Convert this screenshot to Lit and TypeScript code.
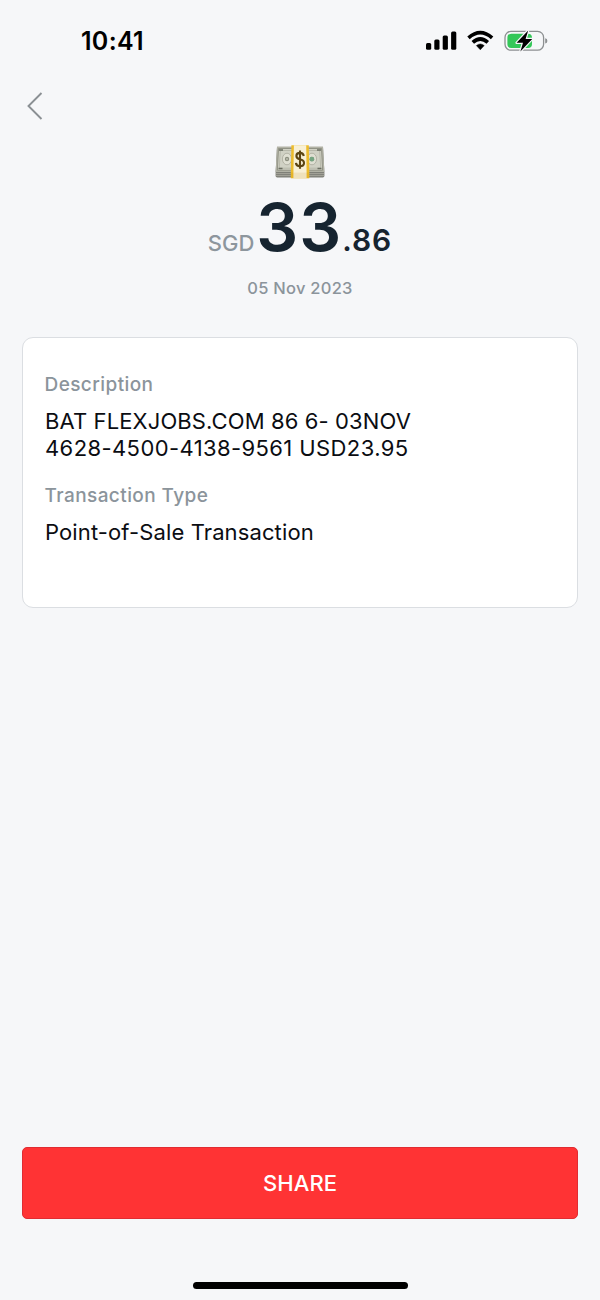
import { LitElement, html, css, svg } from "lit";
import { customElement, property } from "lit/decorators.js";

@customElement("status-bar")
class StatusBar extends LitElement {
  @property() time = "";

  static styles = css`
    :host {
      display: flex;
      justify-content: space-between;
      align-items: center;
      height: 82px;
      padding: 0 52px 0 81px;
      box-sizing: border-box;
    }
    .time {
      font-size: 25px;
      line-height: 30px;
      font-weight: 570;
      letter-spacing: 0.3px;
      color: #000;
    }
    .icons {
      display: block;
    }
  `;

  render() {
    return html`
      <span class="time">${this.time}</span>
      <svg class="icons" width="122" height="24" viewBox="426 28.6 122 24">
        <rect x="426" y="42.6" width="5.2" height="6.8" rx="1.5" />
        <rect x="434.3" y="39.2" width="5.2" height="10.2" rx="1.5" />
        <rect x="442.7" y="35" width="5.2" height="14.4" rx="1.5" />
        <rect x="451.1" y="31" width="5.2" height="18.4" rx="1.5" />
        <g fill="none" stroke="#000" stroke-width="3.7">
          <path d="M468.5 37.4 Q480.3 27.1 492.1 37.4" />
          <path d="M472.8 42 Q480.3 35.2 487.8 42" />
        </g>
        <path d="M476.4 45.2 Q480.3 42 484.2 45.2 L480.3 49.4 Z" stroke="#000" stroke-width=".5" />
        <rect x="505" y="31" width="38.6" height="18.8" rx="6" fill="none" stroke="#8d9092" stroke-width="1.3" />
        <path d="M545.2 37.8 Q547.4 38.2 547.4 40.5 Q547.4 42.8 545.2 43.2 Z" fill="#8d9092" />
        <rect x="507.4" y="33.3" width="24.6" height="14.2" rx="4" fill="#34c759" />
        <path d="M528.2 30 L516.6 42.4 L523 42.4 L520.4 51 L532.2 38.6 L525.6 38.6 Z"
          stroke="#f6f7f9" stroke-width="2.4" paint-order="stroke" stroke-linejoin="round" />
      </svg>
    `;
  }
}

const bill = (x: number) => svg`
  <g transform="translate(${x} 0)">
    <ellipse cx="0" cy="15" rx="4.6" ry="5.8" fill="#dfdfd2" stroke="#a9aa9c" stroke-width=".8" />
    <circle cx="0" cy="15" r="2.2" fill="#8d9080" />
    <circle cx="0" cy="15" r=".8" fill="#dfdfd2" />
  </g>`;

@customElement("money-icon")
class MoneyIcon extends LitElement {
  static styles = css`
    :host,
    .art {
      display: block;
    }
  `;

  render() {
    return html`
      <svg class="art" width="50" height="36" viewBox="0 0 50 36">
        <path d="M2 3 H48 L49.4 28 V32 Q49.4 33.4 47.8 33.4 H2.2 Q.6 33.4 .6 32 V28 Z" fill="#7f8078" />
        <path d="M.8 29.6 H49.2 M.8 31.6 H49.2" stroke="#b4b5aa" stroke-width=".7" />
        <path d="M2 2.6 H48 L49.4 28 H.6 Z" fill="#b1b2a5" />
        <path d="M3.5 4.5 H46.5 L47.6 26.2 H2.4 Z" fill="#d0d1c4" stroke="#85877a" stroke-width=".8" />
        <path d="M5.3 6.5 H44.7 L45.7 24.2 H4.3 Z" fill="none" stroke="#b0b1a3" stroke-width=".8" />
        <path d="M4 6 h4 M42 6 h4 M3.5 24.5 h4 M42.5 24.5 h4" stroke="#6a6d61" stroke-width="1.5" />
        ${bill(12)} ${bill(37)}
        <circle cx="36.8" cy="15.2" r="2.4" fill="#75a581" />
        <path d="M16.4 1.2 H33.8 L34.3 28.4 V34.3 H15.8 V28.4 Z" fill="#edbc2c" />
        <path d="M18.9 1.2 H31.2 L31.6 28.6 V34.3 H18.4 V28.6 Z" fill="#f8f0d5" />
        <path d="M15.8 28.6 H34.3 V34.3 H15.8 Z" fill="#b67e00" opacity=".12" />
        <path d="M28.8 12 Q28.2 8.9 25 8.9 Q21.4 8.9 21.4 12 Q21.4 14.5 25 15.2 Q29 16 29 19 Q29 22.2 25 22.2 Q21.3 22.2 20.9 18.8 M25 6.4 V24.8"
          fill="none" stroke="#5c4512" stroke-width="2.1" />
      </svg>
    `;
  }
}

@customElement("app-root")
class AppRoot extends LitElement {
  static styles = css`
    :host {
      display: flex;
      flex-direction: column;
      height: 1300px;
      box-sizing: border-box;
      background: #f6f7f9;
      font-family: Inter, "Liberation Sans", sans-serif;
      color: #0b0d12;
    }
    .nav {
      display: flex;
      align-items: center;
      height: 47px;
      padding-left: 27px;
    }
    .summary {
      display: flex;
      flex-direction: column;
      align-items: center;
      padding-top: 15px;
    }
    .amount {
      display: flex;
      align-items: baseline;
      height: 66px;
      margin-top: 14px;
      line-height: 66px;
      font-weight: 600;
      color: #162430;
    }
    .currency {
      font-size: 22px;
      font-weight: 550;
      color: #8d969d;
      margin-right: 2px;
    }
    .whole {
      font-size: 66px;
      letter-spacing: 1px;
    }
    .cents {
      font-size: 30px;
      letter-spacing: 0.9px;
    }
    .date {
      margin-top: 18px;
      font-size: 16.5px;
      line-height: 20px;
      font-weight: 550;
      letter-spacing: 0.25px;
      color: #8b949b;
    }
    .card {
      margin: 39px 22px 0;
      height: 271px;
      padding: 35px 21.5px 0;
      box-sizing: border-box;
      border: 1.5px solid #dbdee2;
      border-radius: 11px;
      background: #fff;
    }
    .label {
      font-size: 19px;
      line-height: 24px;
      font-weight: 550;
      letter-spacing: 0.42px;
      color: #8b949b;
    }
    .value {
      margin: 11px 0 22px;
      padding-left: 0.5px;
      font-size: 22px;
      line-height: 27px;
      letter-spacing: 0.12px;
    }
    .line {
      display: block;
    }
    .digits {
      letter-spacing: 0.4px;
    }
    .share {
      margin: auto 22px 0;
      height: 72px;
      border: 1px solid #e02c32;
      border-radius: 5px;
      background: #ff3334;
      color: #fff;
      font: 500 22px/70px Inter, "Liberation Sans", sans-serif;
      letter-spacing: 0.1px;
      padding: 0;
    }
    .home {
      width: 215px;
      height: 7px;
      margin: 63px auto 11px;
      border-radius: 4px;
      background: #000;
    }
  `;

  render() {
    return html`
      <status-bar time="10:41"></status-bar>
      <div class="nav">
        <svg width="16" height="28" viewBox="0 0 16 28" fill="none" stroke="#8b9094" stroke-width="1.9">
          <path d="M14.5 1 L1.5 14 L14.5 27" />
        </svg>
      </div>
      <div class="summary">
        <money-icon></money-icon>
        <div class="amount">
          <span class="currency">SGD</span><span class="whole">33</span><span class="cents">.86</span>
        </div>
        <div class="date">05 Nov 2023</div>
      </div>
      <div class="card">
        <div class="label">Description</div>
        <div class="value">
          <span class="line">BAT FLEXJOBS.COM 86 6- 03NOV</span>
          <span class="line digits">4628-4500-4138-9561 USD23.95</span>
        </div>
        <div class="label">Transaction Type</div>
        <div class="value">Point-of-Sale Transaction</div>
      </div>
      <button class="share">SHARE</button>
      <div class="home"></div>
    `;
  }
}
